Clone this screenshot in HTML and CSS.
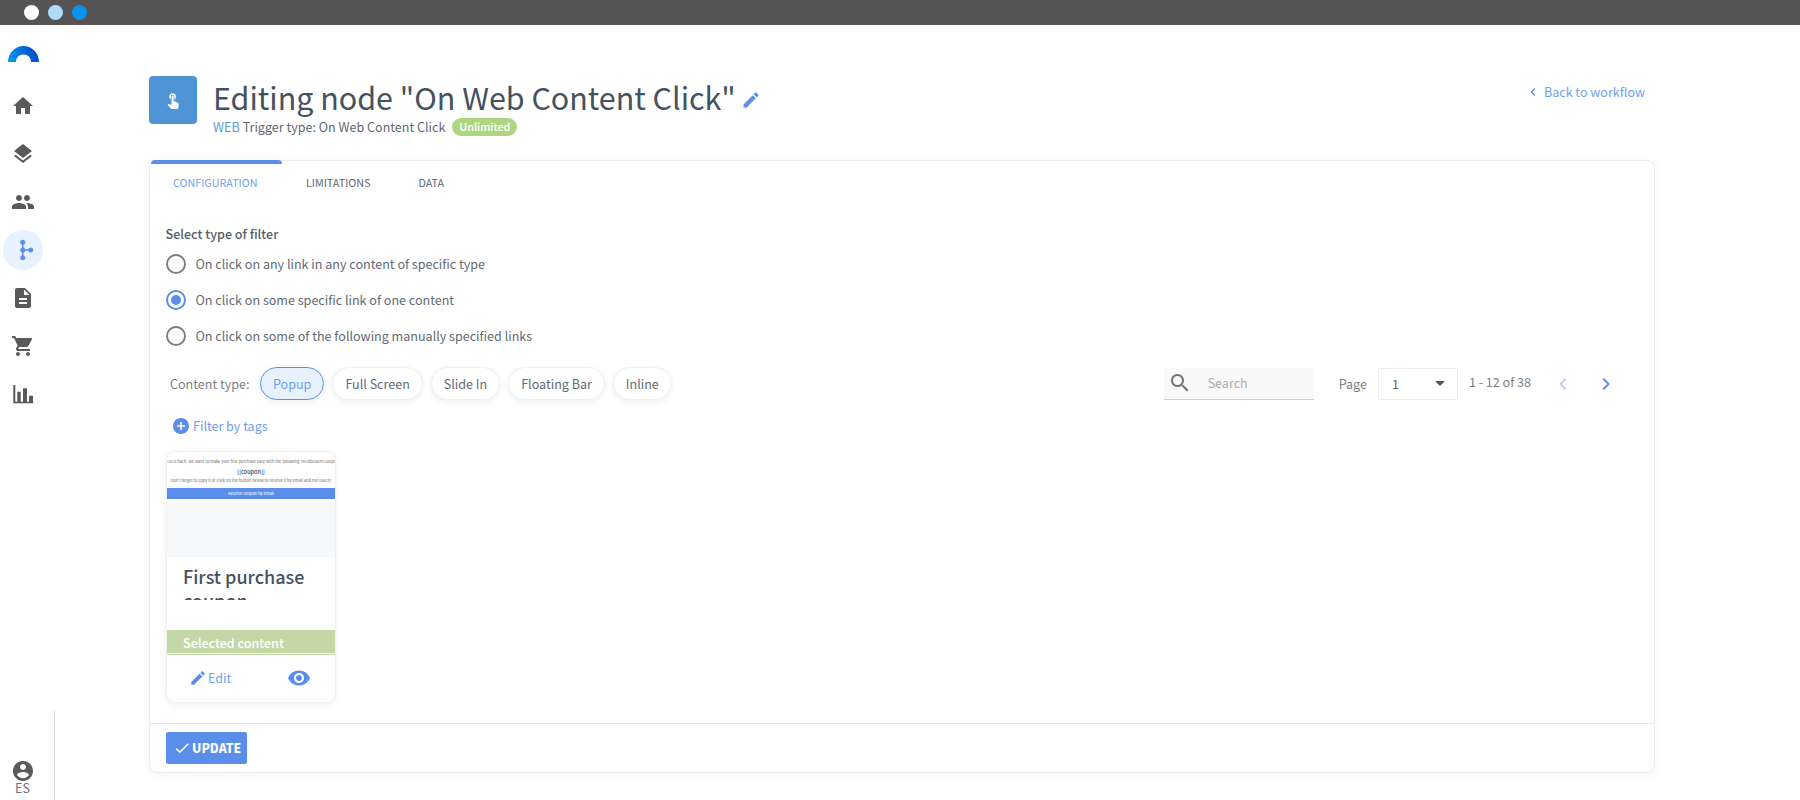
FILE: index.html
```html
<!DOCTYPE html>
<html lang="en">
<head>
<meta charset="utf-8">
<title>Editing node</title>
<link rel="stylesheet" href="styles.css">
</head>
<body>
<header class="topbar">
  <span class="dot dot-white"></span><span class="dot dot-light"></span><span class="dot dot-blue"></span>
</header>
<div class="app">
  <aside class="sidebar">
    <div class="logo">
      <svg width="31" height="16" viewBox="0 0 31 16"><defs><linearGradient id="lg" x1="0" x2="1" y1="0.6" y2="0.4"><stop offset="0" stop-color="#0a97ea"/><stop offset="1" stop-color="#0043c8"/></linearGradient></defs><path d="M0 16C0 7 7 0 15.500 0S31 7 31 16H23C23 11.500 20 8.500 15.500 8.500S8 11.500 8 16Z" fill="url(#lg)"/></svg>
    </div>
    <nav class="nav">
      <a class="nav-item"><svg class="nav-icon" viewBox="0 0 24 24"><path d="M10 20v-6h4v6h5v-8h3L12 3 2 12h3v8z"/></svg></a>
      <a class="nav-item"><svg class="nav-icon" viewBox="0 0 24 24"><path d="M11.990 18.540l-7.370-5.730L3 14.070l9 7 9-7-1.630-1.270-7.380 5.740zM12 16l7.360-5.730L21 9l-9-7-9 7 1.630 1.270L12 16z"/></svg></a>
      <a class="nav-item"><svg class="nav-icon" viewBox="0 0 24 24"><path d="M16 11c1.660 0 2.990-1.340 2.990-3S17.660 5 16 5c-1.660 0-3 1.340-3 3s1.340 3 3 3zm-8 0c1.660 0 2.990-1.340 2.990-3S9.660 5 8 5C6.340 5 5 6.340 5 8s1.340 3 3 3zm0 2c-2.330 0-7 1.170-7 3.500V19h14v-2.500c0-2.330-4.670-3.500-7-3.500zm8 0c-.29 0-.62.02-.97.05 1.160.84 1.970 1.970 1.970 3.450V19h6v-2.500c0-2.330-4.670-3.500-7-3.500z"/></svg></a>
      <a class="nav-item is-active"><svg class="flow-icon" width="24" height="24" viewBox="0 0 24 24"><path d="M11.700 4.300V19.700M11.700 12H19.700" stroke="#5b8eeb" stroke-width="1.600" fill="none"/><circle cx="11.700" cy="4.300" r="2.500" fill="#5b8eeb"/><circle cx="11.700" cy="12" r="2.500" fill="#5b8eeb"/><circle cx="11.700" cy="19.700" r="2.500" fill="#5b8eeb"/><circle cx="19.700" cy="12" r="2.500" fill="#5b8eeb"/></svg></a>
      <a class="nav-item"><svg class="nav-icon" viewBox="0 0 24 24"><path d="M14 2H6c-1.100 0-1.990.9-1.990 2L4 20c0 1.100.89 2 1.990 2H18c1.100 0 2-.9 2-2V8l-6-6zm2 16H8v-2h8v2zm0-4H8v-2h8v2zm-3-5V3.500L18.500 9H13z"/></svg></a>
      <a class="nav-item"><svg class="nav-icon" viewBox="0 0 24 24"><path d="M7 18c-1.100 0-1.990.9-1.990 2S5.900 22 7 22s2-.9 2-2-.9-2-2-2zM1 2v2h2l3.600 7.590-1.350 2.450c-.16.28-.25.61-.25.96 0 1.100.9 2 2 2h12v-2H7.420c-.14 0-.25-.11-.25-.25l.03-.12.9-1.630h7.450c.75 0 1.410-.41 1.750-1.030l3.580-6.490c.08-.14.12-.31.12-.48 0-.55-.45-1-1-1H5.210l-.94-2H1zm16 16c-1.100 0-1.990.9-1.990 2s.89 2 1.990 2 2-.9 2-2-.9-2-2-2z"/></svg></a>
      <a class="nav-item"><svg class="nav-icon" viewBox="0 0 24 24"><path d="M2.300 3h2v16.700h2V9.700h3.400v10h2.300V6.300h4v13.400h2V13.700h4v6h.3v1.600H2.300z"/></svg></a>
    </nav>
    <div class="side-footer">
      <svg class="nav-icon" viewBox="0 0 24 24"><path d="M12 2C6.480 2 2 6.480 2 12s4.480 10 10 10 10-4.480 10-10S17.520 2 12 2zm0 3c1.660 0 3 1.340 3 3s-1.340 3-3 3-3-1.340-3-3 1.340-3 3-3zm0 14.200c-2.500 0-4.710-1.280-6-3.220.03-1.990 4-3.080 6-3.080 1.990 0 5.970 1.090 6 3.080-1.290 1.940-3.500 3.220-6 3.220z"/></svg>
      <span class="lang">ES</span>
    </div>
  </aside>

  <main class="main">
    <section class="page-head">
      <div class="head-icon"><svg viewBox="0 0 24 24" fill="#fff"><path d="M9 11.240V7.500C9 6.120 10.120 5 11.500 5S14 6.120 14 7.500v3.740c1.210-.81 2-2.180 2-3.740C16 5.010 13.990 3 11.500 3S7 5.010 7 7.500c0 1.560.79 2.930 2 3.740zm9.840 4.630l-4.540-2.260c-.17-.07-.35-.11-.54-.11H13v-6c0-.83-.67-1.500-1.500-1.500S10 6.670 10 7.500v10.740l-3.430-.72c-.08-.01-.15-.03-.24-.03-.31 0-.59.13-.79.33l-.79.8 4.940 4.940c.27.27.65.44 1.060.44h6.790c.75 0 1.330-.55 1.440-1.280l.75-5.270c.01-.07.02-.14.02-.2 0-.62-.38-1.160-.91-1.380z"/></svg></div>
      <div class="head-text">
        <h1 class="title">Editing node "On Web Content Click"<svg class="title-edit" width="20" height="20" viewBox="0 0 24 24"><path d="M3 17.250V21h3.750L17.810 9.940l-3.750-3.750L3 17.250zM20.710 7.040c.39-.39.39-1.020 0-1.410l-2.340-2.340c-.39-.39-1.020-.39-1.410 0l-1.830 1.830 3.750 3.750 1.830-1.830z"/></svg></h1>
        <p class="subtitle"><a class="web">WEB</a> Trigger type: On Web Content Click <span class="badge">Unlimited</span></p>
      </div>
      <a class="back"><svg width="16" height="16" viewBox="0 0 24 24"><path d="M15.410 7.410L14 6l-6 6 6 6 1.410-1.410L10.830 12z"/></svg>Back to workflow</a>
    </section>

    <section class="panel">
      <div class="tabs">
        <span class="tab is-active">CONFIGURATION</span>
        <span class="tab">LIMITATIONS</span>
        <span class="tab">DATA</span>
      </div>
      <div class="panel-body">
        <h2 class="filter-title">Select type of filter</h2>
        <div class="radios">
          <label class="radio"><span class="radio-mark"></span>On click on any link in any content of specific type</label>
          <label class="radio is-on"><span class="radio-mark"></span>On click on some specific link of one content</label>
          <label class="radio"><span class="radio-mark"></span>On click on some of the following manually specified links</label>
        </div>
        <div class="toolbar">
          <span class="ct-label">Content type:</span>
          <span class="pill is-on">Popup</span>
          <span class="pill">Full Screen</span>
          <span class="pill">Slide In</span>
          <span class="pill">Floating Bar</span>
          <span class="pill">Inline</span>
          <div class="search">
            <svg width="24" height="24" viewBox="0 0 24 24" fill="#757575"><path d="M15.500 14h-.79l-.28-.27C15.410 12.590 16 11.110 16 9.500 16 5.910 13.090 3 9.500 3S3 5.910 3 9.500 5.910 16 9.500 16c1.610 0 3.090-.59 4.230-1.570l.27.28v.79l5 4.990L20.490 19l-4.990-5zm-6 0C7.010 14 5 11.990 5 9.500S7.010 5 9.500 5 14 7.010 14 9.500 11.990 14 9.500 14z"/></svg>
            <span class="search-text">Search</span>
          </div>
          <span class="page-label">Page</span>
          <div class="page-select"><span>1</span><i class="caret"></i></div>
          <span class="range">1 - 12 of 38</span>
          <svg class="pager pager-prev" width="24" height="24" viewBox="0 0 24 24"><path d="M15.410 7.410L14 6l-6 6 6 6 1.410-1.410L10.830 12z"/></svg>
          <svg class="pager" width="24" height="24" viewBox="0 0 24 24"><path d="M10 6L8.590 7.410 13.170 12l-4.580 4.590L10 18l6-6z"/></svg>
        </div>
        <a class="tags"><svg width="16" height="16" viewBox="2 2 20 20"><path d="M12 2C6.480 2 2 6.480 2 12s4.480 10 10 10 10-4.480 10-10S17.520 2 12 2zm5 11h-4v4h-2v-4H7v-2h4V7h2v4h4v2z"/></svg>Filter by tags</a>
        <article class="card">
          <div class="thumb">
            <p class="t-line">to us is back. We want to make your first purchase easy with the following 5% discount coupon</p>
            <p class="t-coupon">[[coupon]]</p>
            <p class="t-line t-line-b">Don't forget to copy it or click on the button below to receive it by email and not lose it!</p>
            <div class="t-btn">Receive coupon by email</div>
            <div class="t-empty"></div>
          </div>
          <h3 class="card-title">First purchase coupon</h3>
          <div class="selected">Selected content</div>
          <div class="card-actions">
            <a class="edit"><svg width="18" height="18" viewBox="0 0 24 24"><path d="M3 17.250V21h3.750L17.810 9.940l-3.750-3.750L3 17.250zM20.710 7.040c.39-.39.39-1.020 0-1.410l-2.340-2.340c-.39-.39-1.020-.39-1.410 0l-1.830 1.830 3.750 3.750 1.830-1.830z"/></svg>Edit</a>
            <svg class="eye" width="24" height="24" viewBox="0 0 24 24"><path d="M12 4.500C7 4.500 2.730 7.610 1 12c1.730 4.390 6 7.500 11 7.500s9.270-3.110 11-7.500c-1.730-4.390-6-7.500-11-7.500zM12 17c-2.760 0-5-2.240-5-5s2.240-5 5-5 5 2.240 5 5-2.240 5-5 5zm0-8c-1.660 0-3 1.340-3 3s1.340 3 3 3 3-1.340 3-3-1.340-3-3-3z"/></svg>
          </div>
        </article>
      </div>
      <div class="panel-foot">
        <button class="update"><svg width="18" height="18" viewBox="0 0 24 24"><path d="M9 16.170L4.830 12l-1.420 1.410L9 19 21 7l-1.410-1.410z"/></svg>UPDATE</button>
      </div>
    </section>
  </main>
</div>
</body>
</html>
```
FILE: styles.css
```css
* { box-sizing: border-box; }
html, body { margin: 0; padding: 0; height: 800px; overflow: hidden; background: #fff; }
body { font-family: "Noto Sans CJK JP", "Noto Sans", sans-serif; font-size: 12.560px; line-height: 20px; color: #5f6771; display: flex; flex-direction: column; }
p, h1, h2, h3 { margin: 0; }

.topbar { height: 25px; flex: none; background: #545454; display: flex; align-items: center; gap: 9px; padding-left: 24px; }
.dot { width: 15px; height: 15px; border-radius: 50%; }
.dot-white { background: #fff; }
.dot-light { background: #b0dcfb; }
.dot-blue { background: #0a93ea; }

.app { flex: 1; display: flex; min-height: 0; }
.sidebar { width: 55px; flex: none; display: flex; flex-direction: column; }
.logo { padding: 21px 0 0 8px; box-sizing: content-box; height: 16px; }
.logo svg { display: block; }
.nav { display: flex; flex-direction: column; margin-top: 20px; width: 46px; }
.nav-item { height: 48px; display: flex; align-items: center; justify-content: center; position: relative; }
.nav-icon { width: 24px; height: 24px; fill: #5a5a5a; display: block; }
.nav-item.is-active::before { content: ""; width: 40px; height: 40px; border-radius: 50%; background: #e8f2fe; position: absolute; left: 3px; top: 4px; }
.flow-icon { position: relative; }
.side-footer { margin-top: auto; height: 89px; border-right: 1px solid #d8d8d8; display: flex; flex-direction: column; align-items: center; justify-content: flex-end; padding-right: 9px; }
.lang { font-size: 12.560px; line-height: 10px; color: #6d7075; margin-bottom: 7px; }

.main { flex: 1; min-width: 0; padding: 0 145px 0 94px; }
.page-head { display: flex; padding-top: 51px; height: 135px; }
.head-icon { width: 48px; height: 48px; border-radius: 4px; background: #4f94d4; display: flex; align-items: center; justify-content: center; flex: none; }
.head-icon svg { width: 18px; height: 18px; }
.head-text { margin-left: 16px; }
.title { font-size: 30.450px; line-height: 40px; font-weight: 400; color: #44525f; display: flex; align-items: center; height: 41px; }
.title-edit { fill: #5b8eeb; margin-left: 5px; margin-top: 6px; }
.subtitle { line-height: 20px; color: #5f6771; display: flex; align-items: center; gap: 3px; }
.web { color: #5b9bd5; }
.badge { background: #aed581; color: #fff; font-size: 10.760px; line-height: 18px; border-radius: 9px; padding: 0 7px; margin-left: 4px; font-weight: 500; }
.back { margin-left: auto; color: #6f9ff0; line-height: 20px; display: flex; align-items: center; gap: 3px; height: 20px; margin-top: 6px; margin-right: 10px; }
.back svg { fill: #5b8eeb; }

.panel { height: 613px; border: 1px solid #ececec; border-radius: 8px; box-shadow: 0 2px 10px rgba(0,0,0,.05); display: flex; flex-direction: column; background: #fff; }
.tabs { display: flex; height: 44px; padding-left: 1px; }
.tab { font-size: 10.760px; line-height: 16px; color: #5f6771; padding: 14px 24px 0; position: relative; }
.tab.is-active { color: #6f9ff0; width: 131px; padding: 14px 0 0 22px; }
.tab.is-active::before { content: ""; position: absolute; left: 0; right: 0; top: -1px; height: 4px; background: #5b8eeb; border-radius: 4px 4px 0 0; }
.panel-body { flex: 1; padding: 19px 15px 0 16px; min-height: 0; }
.filter-title { font-size: 12.560px; line-height: 20px; font-weight: 500; color: #555e68; margin-left: -.5px; }
.radios { display: flex; flex-direction: column; margin-top: 2px; }
.radio { height: 36px; display: flex; align-items: center; color: #636a73; }
.radio-mark { width: 20px; height: 20px; border-radius: 50%; border: 2px solid #7c7c7c; margin-right: 9.500px; flex: none; }
.radio.is-on .radio-mark { border-color: #5b8eeb; position: relative; }
.radio.is-on .radio-mark::after { content: ""; position: absolute; inset: 3px; border-radius: 50%; background: #5b8eeb; }

.toolbar { display: flex; align-items: center; height: 32px; margin-top: 13.500px; }
.ct-label { color: #7b7f85; margin-left: 4px; width: 90px; white-space: nowrap; }
.pill { height: 33px; border-radius: 17px; border: 1px solid #f0f0f0; padding: 0 12px; display: flex; align-items: center; margin-right: 8px; color: #62696f; box-shadow: 0 2px 6px rgba(0,0,0,.07); white-space: nowrap; background: #fff; }
.pill.is-on { background: #e8f2fe; border-color: #5b8eeb; color: #6f9ff0; }
.search { margin-left: auto; width: 150px; height: 32px; background: #f9f9f9; border-bottom: 1px solid #cfcfcf; display: flex; align-items: center; padding-left: 4px; }
.search-text { color: #a9acb0; margin-left: 16px; }
.page-label { margin-left: 25px; color: #7b7f85; }
.page-select { width: 80px; height: 32px; border: 1px solid #eeeeee; margin-left: 11px; display: flex; align-items: center; justify-content: space-between; padding: 0 12px 0 13px; color: #5f6771; }
.caret { width: 0; height: 0; border-left: 5px solid transparent; border-right: 5px solid transparent; border-top: 5px solid #555; }
.range { margin-left: 11px; color: #7b7f85; margin-top: -3px; white-space: nowrap; }
.pager { fill: #5b8eeb; margin-left: 20px; }
.pager-prev { fill: #bcd2f7; margin-left: 20px; }
.pager:last-child { margin-left: 19px; margin-right: 21px; }

.tags { display: flex; align-items: center; gap: 4px; color: #6f9ff0; margin: 16px 0 0 7px; height: 20px; }
.tags svg { fill: #5b8eeb; }
.card { width: 168px; height: 250px; margin: 16px 0 0 1px; padding-top: 1px; border-radius: 8px; box-shadow: 0 0 0 1px #f0f0f0, 0 2px 8px rgba(0,0,0,.08); overflow: hidden; display: flex; flex-direction: column; background: #fff; }
.thumb { height: 104px; flex: none; overflow: hidden; display: flex; flex-direction: column; text-align: center; }
.t-line { font-size: 4px; line-height: 7px; white-space: nowrap; color: #6a6a6a; margin-top: 5.500px; display: flex; justify-content: center; }
.t-line-b { margin-top: 1.500px; }
.t-coupon { font-size: 5.500px; line-height: 8px; color: #444; margin-top: 2.500px; font-weight: 500; }
.t-btn { height: 11px; margin-top: 3.500px; background: #5b8eeb; color: #fff; font-size: 4px; line-height: 11px; }
.t-empty { flex: 1; margin-top: 4px; background: #f7f8fa; }
.card-title { font-size: 18px; line-height: 24px; font-weight: 500; color: #44525f; height: 36.500px; overflow: hidden; margin-top: 7px; padding: 0 14px 0 16px; flex: none; }
.selected { margin-top: 29.500px; flex: none; height: 25px; background: #c3d8a6; color: #fff; line-height: 25px; padding-left: 16px; font-weight: 500; position: relative; }
.selected::after { content: ""; position: absolute; left: 0; right: 0; bottom: 1px; height: 1px; background: #fff; opacity: .8; }
.card-actions { flex: 1; display: flex; align-items: center; justify-content: space-between; padding: 0 24px 0 22px; }
.edit { display: flex; align-items: center; color: #6f9ff0; gap: 1px; }
.edit svg, .eye { fill: #5b8eeb; }

.panel-foot { border-top: 1px solid #e6e6e6; height: 49px; flex: none; padding: 8px 0 0 16px; }
.update { width: 81px; height: 32px; background: #5b8eeb; border: 0; border-radius: 2px; color: #fff; font-family: inherit; font-size: 12.300px; font-weight: 900; display: flex; align-items: center; gap: 1px; padding: 0 0 0 7px; line-height: 20px; }
.update svg { fill: #fff; }
```
